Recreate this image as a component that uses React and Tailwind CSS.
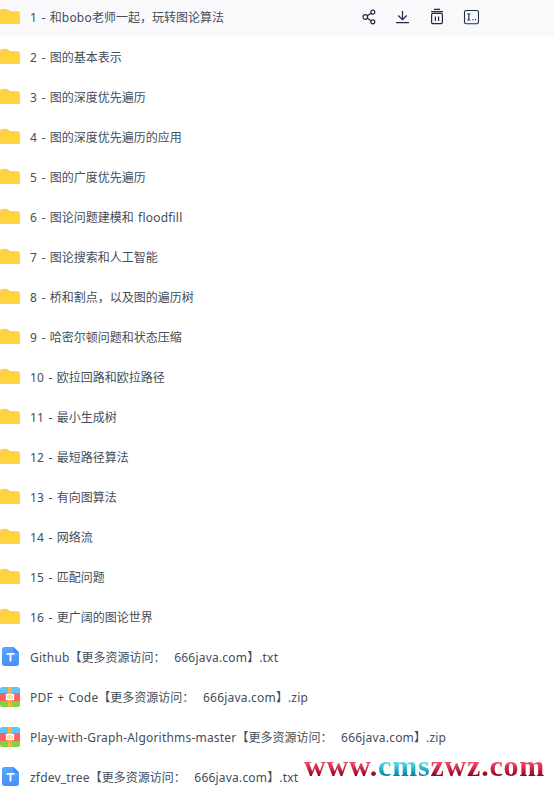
const FONT = { fontFamily: '"Noto Sans", "Noto Sans CJK SC", sans-serif' };

function Folder() {
  return (
    <svg width="20" height="15" viewBox="0 0 20 15" className="shrink-0">
      <path d="M0 2C0 .9.900 0 2 0h4.800c.7 0 1.300.3 1.800.8L10 2.200h8c1.100 0 2 .9 2 2v8.800c0 1.100-.9 2-2 2H2c-1.100 0-2-.9-2-2z" fill="#ffd04a" />
      <path d="M0 4.200h20V13c0 1.100-.9 2-2 2H2c-1.100 0-2-.9-2-2z" fill="#ffd53f" />
    </svg>
  );
}

function TxtIcon() {
  return (
    <svg width="17" height="19" viewBox="0 0 17 19" className="shrink-0">
      <defs>
        <linearGradient id="txtg" x1="0" y1="0" x2="0" y2="1">
          <stop offset="0" stopColor="#56a6ff" />
          <stop offset="1" stopColor="#4a90f5" />
        </linearGradient>
      </defs>
      <path d="M2.500 0H11.500l5.500 5.500v11a2.500 2.500 0 0 1-2.500 2.500h-12A2.500 2.500 0 0 1 0 16.500v-14A2.500 2.500 0 0 1 2.500 0z" fill="url(#txtg)" />
      <path d="M11.500 0l5.500 5.500h-3.500a2 2 0 0 1-2-2z" fill="#3f86ee" />
      <path d="M4.500 6h8v1.700H9.400v6.800H7.600V7.700H4.500z" fill="#fff" />
    </svg>
  );
}

function ZipIcon() {
  return (
    <svg width="20" height="20" viewBox="0 0 20 20" className="shrink-0">
      <path d="M2.500 0h15A2.500 2.500 0 0 1 20 2.500V6H0V2.500A2.500 2.500 0 0 1 2.500 0z" fill="#5cc4fa" />
      <rect x="0" y="6" width="20" height="8" fill="#fb6161" />
      <path d="M0 14h20v3.500a2.500 2.500 0 0 1-2.500 2.500h-15A2.500 2.500 0 0 1 0 17.500z" fill="#80d242" />
      <rect x="8" y="0" width="4" height="20" fill="#fbb03b" />
      <rect x="6.500" y="7.500" width="7" height="5" fill="#fdd9a8" stroke="#fff" strokeWidth="1.300" />
    </svg>
  );
}

function Actions() {
  const c = "#1f2a44";
  return (
    <div className="absolute left-[360px] top-[8px] flex gap-[16px]">
      <svg width="18" height="18" viewBox="0 0 18 18" fill="none" stroke={c} strokeWidth="1.200">
        <circle cx="5.300" cy="9" r="2.300" />
        <circle cx="12.800" cy="4.200" r="2" />
        <circle cx="12.800" cy="13.800" r="2" />
        <path d="M7.300 7.800l3.800-2.500M7.300 10.200l3.800 2.500" />
      </svg>
      <svg width="18" height="18" viewBox="0 0 18 18" fill="none" stroke={c} strokeWidth="1.200">
        <path d="M8.500 3v8.500M4.300 7.500l4.200 4.200 4.200-4.200M2 14.600h13" />
      </svg>
      <svg width="18" height="18" viewBox="0 0 18 18" fill="none" stroke={c} strokeWidth="1.200">
        <path d="M6 1.300h6M3 3.600h12" />
        <rect x="3.600" y="5.400" width="10.800" height="10.200" rx="1.300" />
        <path d="M7.400 8.500v4.500M10.600 8.500v4.500" />
      </svg>
      <svg width="16" height="18" viewBox="0 0 16 18" fill="none" stroke={c} strokeWidth="1.100" className="ml-[1px]">
        <rect x="1.500" y="2.500" width="14" height="13.200" rx="1.800" />
        <path d="M4.300 6h3M5.800 6v6M4.300 12h3" />
        <path d="M9.500 11.700h1M12 11.700h1" strokeWidth="1.200" />
      </svg>
    </div>
  );
}

const rows = [
  ["f", "1 - 和bobo老师一起，玩转图论算法"],
  ["f", "2 - 图的基本表示"],
  ["f", "3 - 图的深度优先遍历"],
  ["f", "4 - 图的深度优先遍历的应用"],
  ["f", "5 - 图的广度优先遍历"],
  ["f", "6 - 图论问题建模和 floodfill"],
  ["f", "7 - 图论搜索和人工智能"],
  ["f", "8 - 桥和割点，以及图的遍历树"],
  ["f", "9 - 哈密尔顿问题和状态压缩"],
  ["f", "10 - 欧拉回路和欧拉路径"],
  ["f", "11 - 最小生成树"],
  ["f", "12 - 最短路径算法"],
  ["f", "13 - 有向图算法"],
  ["f", "14 - 网络流"],
  ["f", "15 - 匹配问题"],
  ["f", "16 - 更广阔的图论世界"],
  ["t", "Github【更多资源访问：  666java.com】.txt"],
  ["z", "PDF + Code【更多资源访问：  666java.com】.zip"],
  ["z", "Play-with-Graph-Algorithms-master【更多资源访问：  666java.com】.zip"],
  ["t", "zfdev_tree【更多资源访问：  666java.com】.txt"],
];

function Label({ text }) {
  const parts = text.split(/([\u0020-\u007e]+)/).filter(Boolean);
  return (
    <span className="text-[12px] leading-[18px] text-[#454d5a] whitespace-pre">
      {parts.map((p, i) =>
        /^[\u0020-\u007e]/.test(p) ? (
          <span key={i} className="tracking-[0.2px] [word-spacing:1px]">{p}</span>
        ) : (
          <span key={i}>{p}</span>
        )
      )}
    </span>
  );
}

export default function App() {
  return (
    <div className="relative w-[554px] h-[787px] overflow-hidden bg-white" style={FONT}>
      <div className="flex flex-col gap-[4px]">
        {rows.map(([k, label], i) => (
          <div key={i} className={`relative flex items-center h-[36px] ${i === 0 ? "bg-[#f9f9fc]" : ""}`}>
            <div className="w-[30px] flex shrink-0 mb-[3px]">
              {k === "f" && <Folder />}
              {k === "t" && <span className="ml-[2px] flex"><TxtIcon /></span>}
              {k === "z" && <ZipIcon />}
            </div>
            <Label text={label} />
            {i === 0 && <Actions />}
          </div>
        ))}
      </div>
      <div className="absolute left-[304px] top-[748px] font-bold text-[30px] leading-[36px] tracking-[0.8px] whitespace-pre" style={{ fontFamily: '"Liberation Serif", serif' }}>
        <span className="bg-gradient-to-b from-[#f5486a] from-[40%] to-[#a00028] to-[78%] bg-clip-text text-transparent">www.</span>
        <span className="bg-gradient-to-b from-[#4fe0ec] from-[40%] to-[#0088aa] to-[78%] bg-clip-text text-transparent">cms</span>
        <span className="bg-gradient-to-b from-[#f5486a] from-[40%] to-[#a00028] to-[78%] bg-clip-text text-transparent">zwz.com</span>
      </div>
    </div>
  );
}
